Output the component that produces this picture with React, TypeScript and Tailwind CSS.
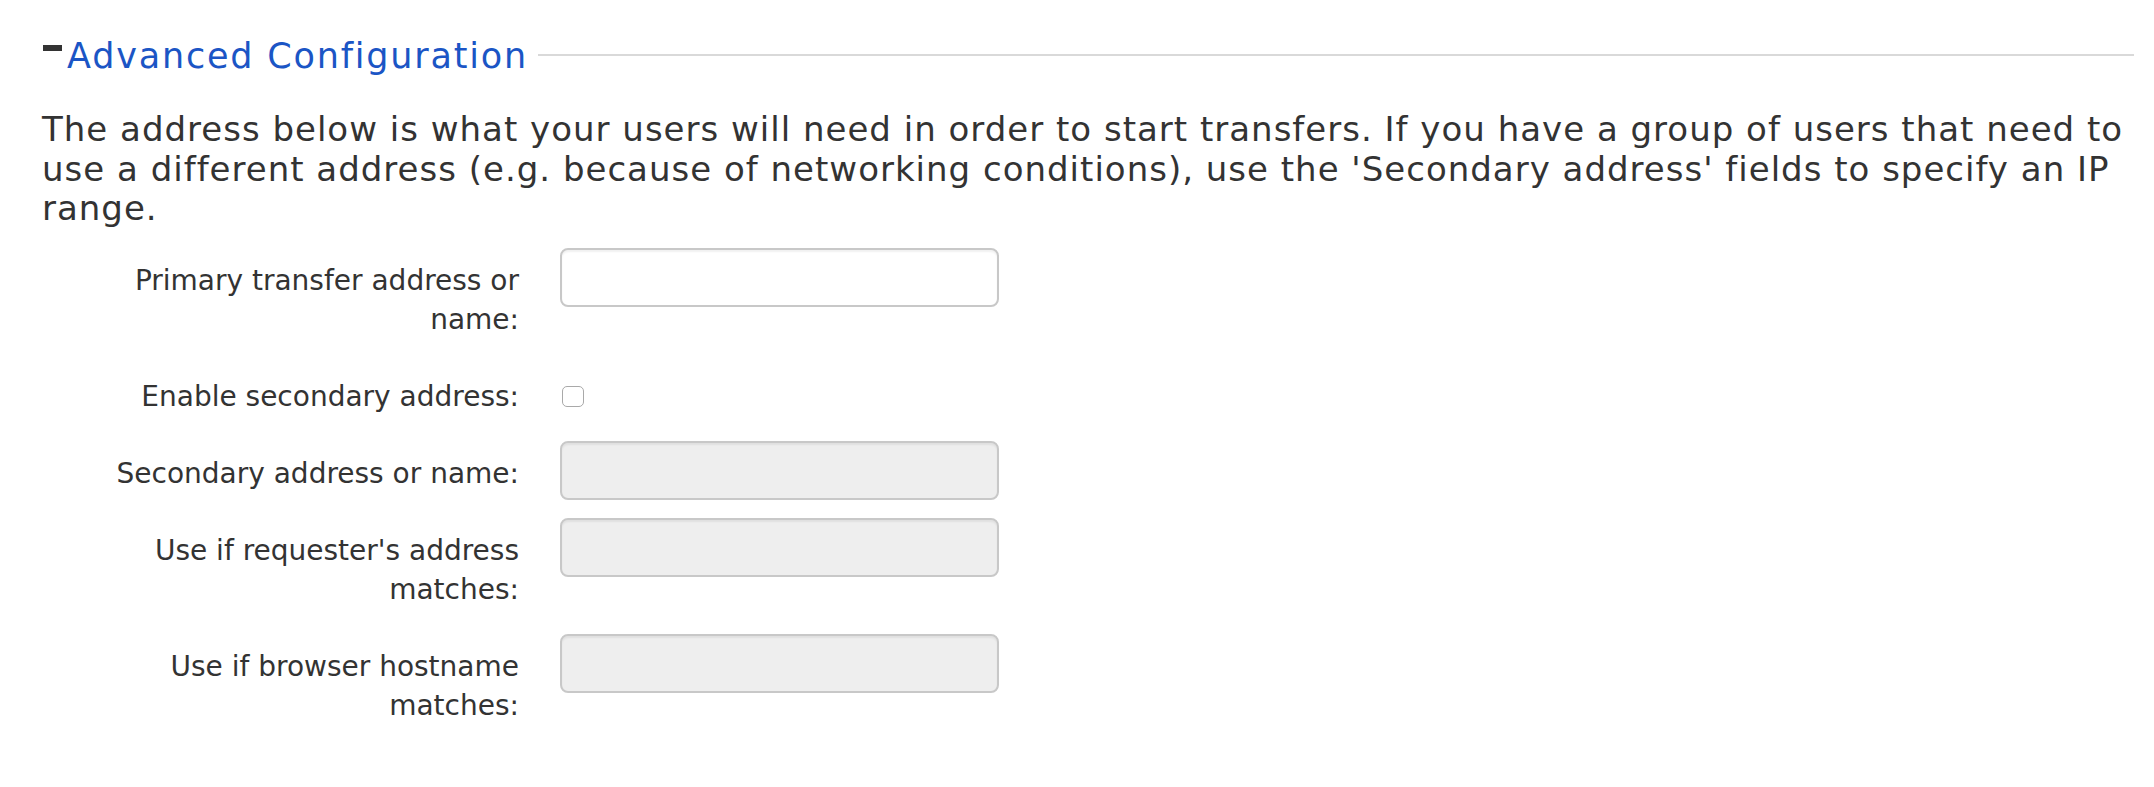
import React from "react";

const font = { fontFamily: '"DejaVu Sans", Verdana, sans-serif' };

function Row({
  label,
  children,
}: {
  label: React.ReactNode;
  children: React.ReactNode;
}) {
  return (
    <div className="flex items-start mb-[17px]">
      <label className="w-[477px] shrink-0 text-right text-[28px] leading-[39px] pt-[13px] pb-[8px] text-[#333333]">
        {label}
      </label>
      <div className="ml-[41px]">{children}</div>
    </div>
  );
}

function TextInput({ disabled }: { disabled?: boolean }) {
  return (
    <input
      type="text"
      disabled={disabled}
      className={
        disabled
          ? "block w-[439px] h-[59px] rounded-[8px] border-2 border-[#c8c8c8] bg-[#eeeeee] shadow-[inset_0_2px_2px_rgba(0,0,0,0.06)] outline-none"
          : "block w-[439px] h-[59px] rounded-[8px] border-2 border-[#c8c8c8] bg-white shadow-[inset_0_2px_2px_rgba(0,0,0,0.06)] outline-none"
      }
    />
  );
}

export default function App() {
  return (
    <div className="w-full h-[787px] bg-white text-[#333333] overflow-hidden" style={font}>
      <div className="flex items-start pt-[36px] pl-[43px] pr-[20px]">
        <span className="block w-[19px] h-[6px] bg-[#333333] mt-[9px] shrink-0" />
        <span className="ml-[5px] text-[35px] leading-[40px] text-[#1b55c5] tracking-[1.8px] whitespace-nowrap">
          Advanced Configuration
        </span>
        <div className="flex-1 h-[2px] bg-[#d9d9d9] mt-[18px] ml-[10px]" />
      </div>

      <p className="mt-[34px] pl-[42px] pr-[20px] text-[34px] leading-[39.5px] tracking-[1px]">
        The address below is what your users will need in order to start transfers. If you
        have a group of users that need to use a different address (e.g. because of networking
        conditions), use the 'Secondary address' fields to specify an IP range.
      </p>

      <div className="mt-[19px] pl-[42px]">
        <Row label={<>Primary transfer address or<br />name:</>}>
          <TextInput />
        </Row>
        <Row label="Enable secondary address:">
          <input
            type="checkbox"
            className="block appearance-none w-[22px] h-[21px] mt-[22px] ml-[2px] rounded-[5px] border-[1.5px] border-[#a9a9a9] bg-white"
          />
        </Row>
        <Row label="Secondary address or name:">
          <TextInput disabled />
        </Row>
        <Row label={<>Use if requester's address<br />matches:</>}>
          <TextInput disabled />
        </Row>
        <Row label={<>Use if browser hostname<br />matches:</>}>
          <TextInput disabled />
        </Row>
      </div>
    </div>
  );
}
